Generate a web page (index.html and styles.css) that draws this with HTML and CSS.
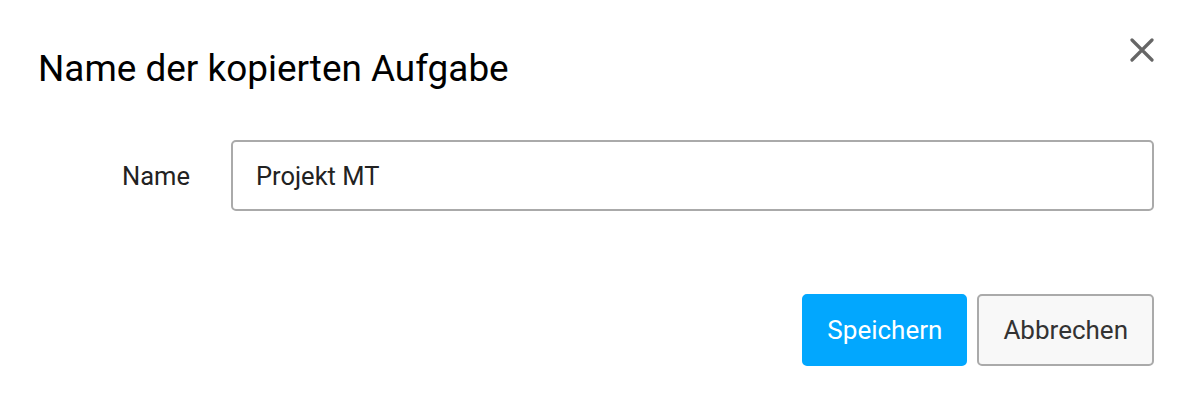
FILE: index.html
```html
<!DOCTYPE html>
<html lang="de">
<head>
<meta charset="utf-8">
<title>Name der kopierten Aufgabe</title>
<link rel="stylesheet" href="styles.css">
</head>
<body>
<div class="dialog">
  <div class="dialog-header">
    <h1 class="dialog-title">Name der kopierten Aufgabe</h1>
    <button class="close-btn" type="button" aria-label="Schließen">
      <svg width="24" height="24" viewBox="0 0 24 24"><path d="M2 2 L22 22 M22 2 L2 22" stroke="#666" stroke-width="3.2" stroke-linecap="round" fill="none"/></svg>
    </button>
  </div>
  <div class="form-row">
    <label class="form-label" for="name">Name</label>
    <input class="form-input" id="name" type="text" value="Projekt MT">
  </div>
  <div class="dialog-footer">
    <button class="btn btn-primary" type="button">Speichern</button>
    <button class="btn btn-default" type="button">Abbrechen</button>
  </div>
</div>
</body>
</html>
```
FILE: styles.css
```css
html, body {
  margin: 0;
  padding: 0;
  background: #ffffff;
}
body {
  font-family: Roboto, "Liberation Sans", sans-serif;
  color: #222;
}
.dialog {
  padding: 38px 36px 0 38px;
}
.dialog-header {
  display: flex;
  justify-content: space-between;
  align-items: flex-start;
}
.dialog-title {
  margin: 8px 0 0 0;
  font-size: 36.9px;
  line-height: 45px;
  font-weight: 400;
  color: #000;
}
.close-btn {
  border: 0;
  background: transparent;
  padding: 0;
  margin: 0;
  width: 24px;
  height: 24px;
  display: block;
  cursor: pointer;
}
.close-btn svg {
  display: block;
}
.form-row {
  display: flex;
  align-items: center;
  margin-top: 49px;
}
.form-label {
  width: 152px;
  flex: none;
  text-align: right;
  font-size: 25.5px;
  color: #222;
  margin-right: 41px;
}
.form-input {
  flex: 1;
  min-width: 0;
  height: 71px;
  box-sizing: border-box;
  border: 2px solid #aaa;
  border-radius: 5px;
  padding: 0 23px;
  font-family: Roboto, "Liberation Sans", sans-serif;
  font-size: 25.5px;
  color: #222;
  background: #fff;
  outline: none;
}
.dialog-footer {
  display: flex;
  justify-content: flex-end;
  gap: 10px;
  margin-top: 83px;
}
.btn {
  height: 72px;
  box-sizing: border-box;
  border-radius: 5px;
  border: 2px solid transparent;
  padding: 0 23px;
  font-family: Roboto, "Liberation Sans", sans-serif;
  font-size: 26px;
  cursor: pointer;
}
.btn-primary {
  background: #02a7fe;
  border-color: #02a7fe;
  color: #fff;
}
.btn-default {
  background: #f8f8f8;
  border-color: #aaa;
  color: #333;
  padding: 0 24px;
}
```
